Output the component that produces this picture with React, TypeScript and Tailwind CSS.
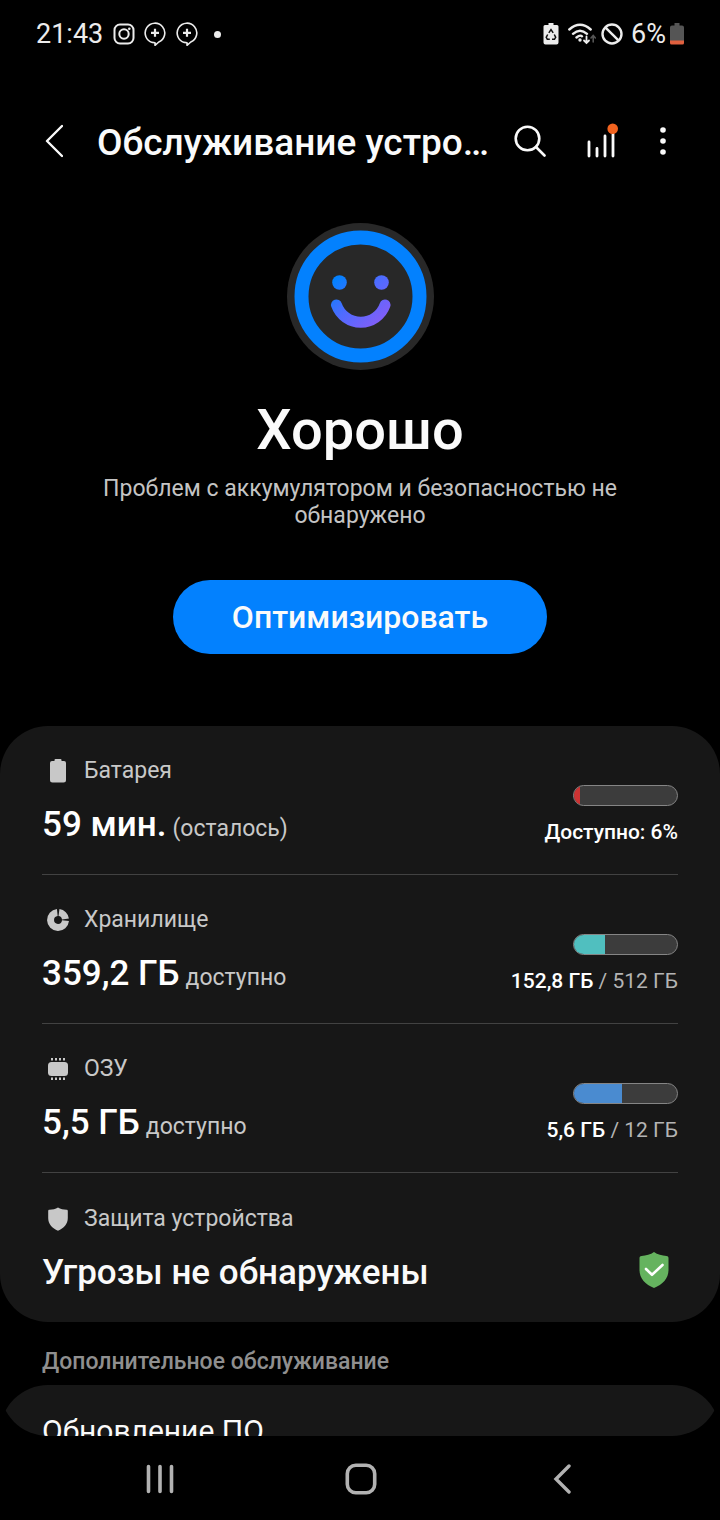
import type { ReactNode } from "react"

interface MeterRowProps {
  icon: ReactNode
  label: string
  value: string
  note: string
  percent: number
  fillClass: string
  used: string
  total?: string
}

const BatteryIcon = () => (
  <svg viewBox="0 0 24 24" className="size-6" fill="currentColor">
    <path d="M9.500 0h5a1 1 0 0 1 1 1v1h2.500a2 2 0 0 1 2 2v17a2.500 2.500 0 0 1-2.500 2.500h-11A2.500 2.500 0 0 1 4 21V4a2 2 0 0 1 2-2h2.500V1a1 1 0 0 1 1-1z" />
  </svg>
)

const StorageIcon = () => (
  <svg viewBox="0 0 24 24" className="size-6" fill="none" stroke="currentColor" strokeWidth="7">
    <path d="M11.300 4.500A7.500 7.500 0 1 0 19.500 12.700" />
    <path d="M13 4.550A7.500 7.500 0 0 1 19.450 11" />
  </svg>
)

const MemoryIcon = () => (
  <svg viewBox="0 0 24 24" className="size-6" fill="currentColor">
    <rect x="2" y="5" width="20" height="14" rx="3.500" />
    <path d="M5 1h2v2.500H5zM9 1h2v2.500H9zM13 1h2v2.500h-2zM17 1h2v2.500h-2zM5 20.500h2V23H5zM9 20.500h2V23H9zM13 20.500h2V23h-2zM17 20.500h2V23h-2z" />
  </svg>
)

const ShieldIcon = () => (
  <svg viewBox="0 0 24 24" className="size-6" fill="currentColor">
    <path d="M12 .5c2.500 1.500 5.500 2.200 8.500 2.300 .8 0 1.300.5 1.300 1.300V11c0 6-4 10.300-9.800 12.700C6.200 21.300 2.200 17 2.200 11V4.100c0-.8.5-1.300 1.300-1.300C6.500 2.700 9.500 2 12 .5z" />
  </svg>
)

const ChatPlusIcon = () => (
  <svg viewBox="0 0 22 24" className="h-6 w-[22px]" fill="none" stroke="currentColor" strokeWidth="1.600">
    <path d="M8.300 20.400A9.800 9.800 0 1 1 14.800 20L11 23.300v-2.500z" strokeLinejoin="round" />
    <path d="M11 6.800v8M7 10.800h8" strokeWidth="2.200" />
  </svg>
)

function StatusBar() {
  return (
    <div className="flex h-[68px] shrink-0 items-center justify-between pr-9 pl-9 text-[#ececec]">
      <div className="flex items-center">
        <span className="text-[27px] leading-8">21:43</span>
        <svg viewBox="0 0 22 22" className="ml-[10px] size-[22px]" fill="none" stroke="currentColor" strokeWidth="2">
          <rect x="1.500" y="1.500" width="19" height="19" rx="5.500" />
          <circle cx="11" cy="11" r="4.700" />
          <circle cx="16.300" cy="5.700" r="1.300" fill="currentColor" stroke="none" />
        </svg>
        <div className="ml-[9px] flex gap-[10px]">
          <ChatPlusIcon />
          <ChatPlusIcon />
        </div>
        <span className="ml-4 size-[7px] rounded-full bg-[#ececec]" />
      </div>
      <div className="flex items-center">
        <svg viewBox="0 0 16 22" className="h-[22px] w-4">
          <path d="M5.500 0h5v2H14a1.500 1.500 0 0 1 1.500 1.500v16A2 2 0 0 1 13.500 21.500h-11a2 2 0 0 1-2-2v-16A1.500 1.500 0 0 1 2 2h3.500z" fill="currentColor" />
          <path d="M5.800 9.800L8 6.500l2.200 3.300M11.300 11.500l1.400 2.800-1.200 1.900H9M6.800 16.200H4.300l-1.100-1.900 1.500-2.800" fill="none" stroke="#111" strokeWidth="1.500" />
        </svg>
        <svg viewBox="0 0 28 22" className="ml-[9px] h-[22px] w-7" fill="none" stroke="currentColor" strokeWidth="2.400" strokeLinecap="round">
          <path d="M1.300 6.500Q12 -3 22.700 6.500M5 10.800Q12 4.500 19 10.800M8.500 14.500Q12 11.500 14 13.300" />
          <circle cx="12" cy="17" r="1.700" fill="currentColor" stroke="none" />
          <path d="M18.500 13.500v6M16 17.500l2.500 2.500 2.500-2.500" strokeWidth="1.800" />
          <path d="M25.200 19v-6M23 15l2.200-2.500L27.400 15" stroke="#555" strokeWidth="1.600" />
        </svg>
        <svg viewBox="0 0 22 22" className="ml-[5px] size-[22px]" fill="none" stroke="currentColor" strokeWidth="2.400">
          <circle cx="11" cy="11" r="9.500" />
          <path d="M4.300 4.300l13.400 13.400" />
        </svg>
        <span className="ml-2 text-[27px] leading-8">6%</span>
        <svg viewBox="0 0 14 22" className="ml-1 h-[22px] w-[14px]">
          <path d="M4.500 0h5v2.500H12a2 2 0 0 1 2 2V18H0V4.500a2 2 0 0 1 2-2h2.500z" fill="#555" />
          <path d="M0 17.500h14v2.500a1.500 1.500 0 0 1-1.500 1.500h-11A1.500 1.500 0 0 1 0 20z" fill="#e0603f" />
        </svg>
      </div>
    </div>
  )
}

function Header() {
  return (
    <header className="flex h-[146px] shrink-0 items-center pr-[53px] pl-[45px]">
      <button aria-label="Назад">
        <svg viewBox="0 0 18 34" className="h-[34px] w-[18px]" fill="none" stroke="currentColor" strokeWidth="2.400" strokeLinecap="round" strokeLinejoin="round">
          <path d="M17 2L2 17l15 15" />
        </svg>
      </button>
      <h1 className="mt-1 ml-[34px] w-0 flex-1 text-[37px] leading-10 font-medium whitespace-nowrap">
        Обслуживание устро…
      </h1>
      <button aria-label="Поиск">
        <svg viewBox="0 0 32 32" className="size-8" fill="none" stroke="currentColor" strokeWidth="2.600" strokeLinecap="round">
          <circle cx="13.500" cy="13.500" r="11.800" />
          <path d="M22 22l8.500 8.500" />
        </svg>
      </button>
      <button aria-label="Статистика" className="ml-10">
        <svg viewBox="0 0 32 36" className="h-9 w-8" fill="none" stroke="currentColor" strokeWidth="2.800" strokeLinecap="round">
          <path d="M3 19v14M11 25.500V33M19 13v20M27 11v22" />
          <circle cx="26.700" cy="5.700" r="5.300" fill="#f2631f" stroke="none" />
        </svg>
      </button>
      <button aria-label="Ещё" className="ml-[41px]">
        <svg viewBox="0 0 8 30" className="h-[30px] w-2" fill="currentColor">
          <circle cx="4" cy="4" r="2.800" />
          <circle cx="4" cy="15" r="2.800" />
          <circle cx="4" cy="26" r="2.800" />
        </svg>
      </button>
    </header>
  )
}

function Smiley() {
  return (
    <svg viewBox="0 0 147 147" className="size-[147px]">
      <defs>
        <linearGradient id="smile" gradientUnits="userSpaceOnUse" x1="50" y1="55" x2="95" y2="105">
          <stop offset="0" stopColor="#0381fe" />
          <stop offset="0.450" stopColor="#4f6bff" />
          <stop offset="1" stopColor="#8a5cf6" />
        </linearGradient>
      </defs>
      <circle cx="73.500" cy="73.500" r="73.500" fill="#282828" />
      <circle cx="73.500" cy="73.500" r="59" fill="none" stroke="#0381fe" strokeWidth="14" />
      <circle cx="52.500" cy="59.500" r="7.300" fill="url(#smile)" />
      <circle cx="94.500" cy="59.500" r="7.300" fill="url(#smile)" />
      <path d="M49.500 82A25.700 25.700 0 0 0 98 82" fill="none" stroke="url(#smile)" strokeWidth="11" strokeLinecap="round" />
    </svg>
  )
}

function RowLabel({ icon, children }: { icon: ReactNode; children: ReactNode }) {
  return (
    <div className="flex items-center gap-[14px] pl-1 text-[23px] leading-8 text-[#c8c8c8]">
      {icon}
      {children}
    </div>
  )
}

function MeterRow({ icon, label, value, note, percent, fillClass, used, total }: MeterRowProps) {
  return (
    <li className="flex items-end justify-between border-b border-[#424242] py-[29px]">
      <div>
        <RowLabel icon={icon}>{label}</RowLabel>
        <p className="mt-[18px] flex items-baseline gap-[6px] leading-10">
          <strong className="text-[35px] font-medium text-white">{value}</strong>
          <span className="text-[23px] leading-6 text-[#c8c8c8]">{note}</span>
        </p>
      </div>
      <div className="flex flex-col items-end gap-[13px]">
        <div className="h-[21px] w-[105px] overflow-hidden rounded-full border border-[#858585] bg-[#3c3c3c]">
          <div className={`h-full ${fillClass}`} style={{ width: `${percent}%` }} />
        </div>
        <p className="text-[21px] leading-[26px] text-[#b4b4b4]">
          <span className="font-medium text-white">{used}</span>
          {total && ` / ${total}`}
        </p>
      </div>
    </li>
  )
}

export default function App() {
  return (
    <div className="flex h-screen flex-col bg-black font-['Roboto',sans-serif] text-[#fafafa]">
      <StatusBar />
      <Header />

      <main className="min-h-0 flex-1 overflow-hidden rounded-b-[48px]">
        <section className="flex flex-col items-center px-20 pt-[9px] text-center">
          <Smiley />
          <h2 className="mt-7 text-[56px] leading-16 font-medium">Хорошо</h2>
          <p className="mt-[13px] text-[23px] leading-[27px] text-[#c4c4c4]">
            Проблем с аккумулятором и безопасностью не обнаружено
          </p>
          <button className="mt-[51px] h-[74px] rounded-full bg-[#0381fe] px-[59px] text-[32px] font-medium">
            Оптимизировать
          </button>
        </section>

        <ul className="mt-[72px] rounded-[48px] bg-[#171717] px-[42px]">
          <MeterRow
            icon={<BatteryIcon />}
            label="Батарея"
            value="59 мин."
            note="(осталось)"
            percent={6}
            fillClass="bg-[#cc3333]"
            used="Доступно: 6%"
          />
          <MeterRow
            icon={<StorageIcon />}
            label="Хранилище"
            value="359,2 ГБ"
            note="доступно"
            percent={30}
            fillClass="bg-[#50bfbf]"
            used="152,8 ГБ"
            total="512 ГБ"
          />
          <MeterRow
            icon={<MemoryIcon />}
            label="ОЗУ"
            value="5,5 ГБ"
            note="доступно"
            percent={47}
            fillClass="bg-[#4a8bd0]"
            used="5,6 ГБ"
            total="12 ГБ"
          />
          <li className="flex items-end justify-between pt-[30px] pr-[9px] pb-[29px]">
            <div>
              <RowLabel icon={<ShieldIcon />}>Защита устройства</RowLabel>
              <p className="mt-[18px] text-[35px] leading-10 font-medium">Угрозы не обнаружены</p>
            </div>
            <svg viewBox="0 0 30 36" className="mb-[5px] h-9 w-[30px]">
              <path d="M15 0c3.500 2.500 8 3.700 12.500 4 1.200.1 2 .8 2 2V18c0 8.500-6 14.500-14.500 18C6.500 32.500.5 26.500.5 18V6c0-1.200.8-1.900 2-2C7 3.700 11.500 2.500 15 0z" fill="#65b35f" />
              <path d="M7 17l6 5.800L23.500 13" fill="none" stroke="#fff" strokeWidth="2.600" strokeLinecap="round" strokeLinejoin="round" />
            </svg>
          </li>
        </ul>

        <h3 className="px-[42px] pt-6 pb-[7px] text-[23px] leading-8 font-medium text-[#8f8f8f]">
          Дополнительное обслуживание
        </h3>
        <div className="rounded-t-[48px] bg-[#171717] px-[42px] py-[26px]">
          <p className="text-[30px] leading-10">Обновление ПО</p>
        </div>
      </main>

      <nav className="grid h-[84px] shrink-0 grid-cols-3 items-center justify-items-center pt-0.5 pr-[57px] pl-[59px] text-[#b2b2b2]">
        <button aria-label="Последние">
          <svg viewBox="0 0 30 30" className="size-[30px]" fill="none" stroke="currentColor" strokeWidth="3.600" strokeLinecap="round">
            <path d="M3.500 2.500v25M15 2.500v25M26.500 2.500v25" />
          </svg>
        </button>
        <button aria-label="Главный экран">
          <svg viewBox="0 0 32 32" className="size-8" fill="none" stroke="currentColor" strokeWidth="3.600">
            <rect x="2.300" y="2.300" width="27.400" height="27.400" rx="8.500" />
          </svg>
        </button>
        <button aria-label="Назад">
          <svg viewBox="0 0 18 30" className="h-[30px] w-[18px]" fill="none" stroke="currentColor" strokeWidth="3.400" strokeLinecap="round">
            <path d="M16 2L3 15l13 13" />
          </svg>
        </button>
      </nav>
    </div>
  )
}
